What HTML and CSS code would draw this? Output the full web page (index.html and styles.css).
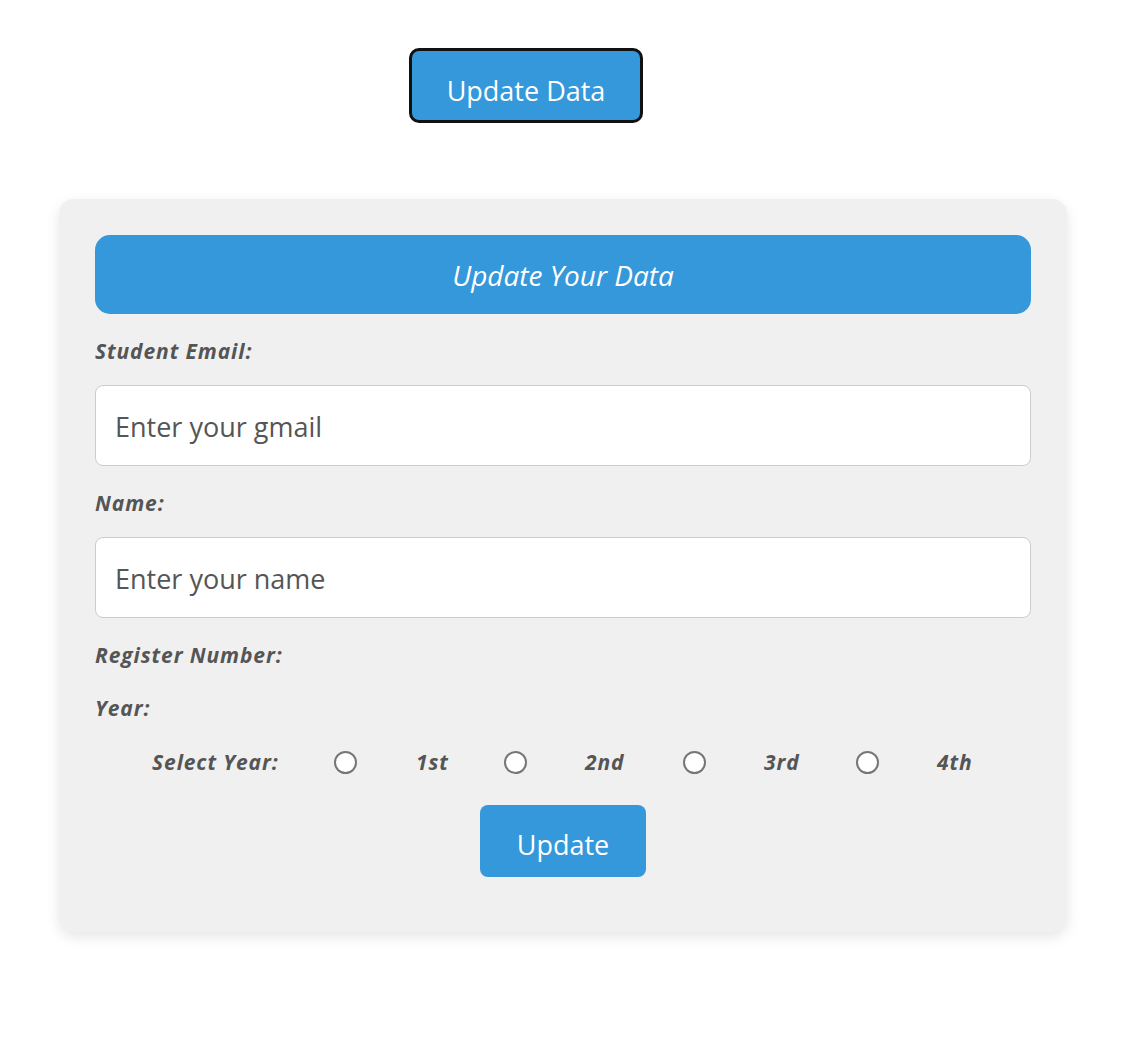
FILE: index.html
```html
<!DOCTYPE html>
<html>
<head>
<meta charset="utf-8">
<link rel="stylesheet" href="styles.css">
</head>
<body>
<div class="top">
  <button class="top-btn">Update Data</button>
</div>
<div class="card">
  <div class="card-head">Update Your Data</div>
  <label class="lbl">Student Email:</label>
  <input class="field" type="text" placeholder="Enter your gmail">
  <label class="lbl">Name:</label>
  <input class="field" type="text" placeholder="Enter your name">
  <label class="lbl">Register Number:</label>
  <label class="lbl lbl-year">Year:</label>
  <div class="year-row">
    <span class="yl yl-sel">Select Year:</span>
    <span class="radio r1"></span><span class="yl y1">1st</span>
    <span class="radio r2"></span><span class="yl y2">2nd</span>
    <span class="radio r3"></span><span class="yl y3">3rd</span>
    <span class="radio r4"></span><span class="yl y4">4th</span>
  </div>
  <div class="submit-wrap"><button class="submit">Update</button></div>
</div>
</body>
</html>
```
FILE: styles.css
```css
html, body { margin: 0; padding: 0; background: #fff; }
body { font-family: "Open Sans", "Noto Sans", sans-serif; padding-bottom: 60px; }
.top { padding: 48px 0 0 409px; height: 75px; }
.top-btn {
  box-sizing: border-box; width: 234px; height: 75px;
  background: #3498db; color: #fff; border: 3px solid #111; border-radius: 10px;
  font-family: inherit; font-size: 27px; padding: 9px 0 0;
}
.card {
  box-sizing: border-box; width: 1008px; margin: 76px 0 0 59px;
  background: #f0f0f0; border-radius: 15px; padding: 36px 36px 36px;
  box-shadow: 0 5px 14px rgba(0,0,0,0.1);
  height: 733px;
}
.card-head {
  height: 79px; background: #3498db; color: #fff; border-radius: 15px;
  display: flex; align-items: center; justify-content: center;
  font-style: italic; font-size: 28px;
}
.lbl {
  display: block; margin-top: 23px; height: 28px; line-height: 28px;
  font-size: 21px; letter-spacing: 0.9px; font-weight: bold; font-style: italic; color: #555;
}
.lbl-year { margin-top: 25px; }
.field {
  display: block; box-sizing: border-box; width: 100%; height: 81px; margin-top: 20px;
  border: 1px solid #ccc; border-radius: 8px; background: #fff;
  padding: 2px 19px 0; font-family: inherit; font-size: 27px; color: #555; outline: none;
}
.field::placeholder { color: #555; }
.year-row {
  position: relative; height: 28px; margin-top: 26px;
}
.yl {
  position: absolute; top: 0; line-height: 28px;
  font-size: 21px; letter-spacing: 0.9px; font-weight: bold; font-style: italic; color: #555;
}
.radio {
  position: absolute; top: 3px; box-sizing: border-box; width: 23px; height: 23px;
  border: 2px solid #767676; border-radius: 50%; background: #fff;
}
.yl-sel { left: 57px; }
.r1 { left: 239px; } .y1 { left: 321px; }
.r2 { left: 409px; } .y2 { left: 490px; }
.r3 { left: 588px; } .y3 { left: 669px; }
.r4 { left: 761px; } .y4 { left: 842px; }
.submit-wrap { display: flex; justify-content: center; margin-top: 29px; }
.submit {
  width: 166px; height: 72px; border: none; border-radius: 8px;
  background: #3498db; color: #fff; font-family: inherit; font-size: 27px;
  padding: 7px 0 0;
}
```
